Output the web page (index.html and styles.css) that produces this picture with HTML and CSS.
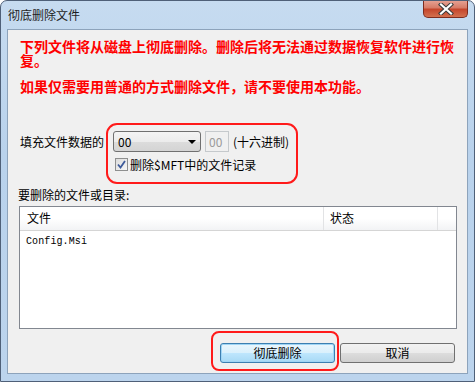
FILE: index.html
```html
<!DOCTYPE html>
<html lang="zh-CN">
<head>
  <meta charset="UTF-8" />
  <title>彻底删除文件</title>
  <link rel="stylesheet" href="styles.css">
</head>
<body>

  <div class="window">
    <div class="titlebar">
      <span class="title">彻底删除文件</span>
      <div class="close">
        <svg width="16" height="12" viewBox="0 0 16 12">
          <path d="M3 1.5 L13 10.5 M13 1.5 L3 10.5" stroke="#3b3b3b" stroke-width="4.2" stroke-linecap="square"/>
          <path d="M3 1.5 L13 10.5 M13 1.5 L3 10.5" stroke="#ffffff" stroke-width="2.2" stroke-linecap="square"/>
        </svg>
      </div>
    </div>

    <div class="client">
      <p class="warn">下列文件将从磁盘上彻底删除。删除后将无法通过数据恢复软件进行恢复。</p>
      <p class="warn">如果仅需要用普通的方式删除文件，请不要使用本功能。</p>

      <div class="fill-row">
        <span class="fill-label">填充文件数据的</span>
        <div class="combo">
          <span>00</span>
          <span class="arrow"></span>
        </div>
        <div class="edit">00</div>
        <span class="hex">(十六进制)</span>
      </div>

      <div class="check-row">
        <span class="checkbox">
          <svg width="9" height="9" viewBox="0 0 9 9">
            <path d="M1 4.5 L3.5 7.5 L8 1" fill="none" stroke="#3d5a9a" stroke-width="1.8"/>
          </svg>
        </span>
        <span>删除$MFT中的文件记录</span>
      </div>

      <div class="list-label">要删除的文件或目录:</div>
      <div class="list">
        <div class="list-head">
          <div class="col-file">文件</div>
          <div class="col-state">状态</div>
          <div class="col-rest"></div>
        </div>
        <div class="list-row">Config.Msi</div>
      </div>

      <div class="buttons">
        <button class="btn btn-default">彻底删除</button>
        <button class="btn">取消</button>
      </div>
    </div>

    <div class="mark mark-fill"></div>
    <div class="mark mark-btn"></div>
  </div>

</body>
</html>
```

FILE: styles.css
```css
html, body {
  margin: 0; padding: 0;
  background: #ffffff;
}
.window {
  position: relative;
  width: 475px; height: 382px;
  box-sizing: border-box;
  border: 1px solid #4f6078;
  border-radius: 7px 7px 0 0;
  background: linear-gradient(to bottom, #c6dbf0 0%, #b9d2ec 40%, #bcd4ed 100%);
  font-family: "Noto Sans CJK SC", "DejaVu Sans", sans-serif;
  font-size: 12px;
  color: #000;
  overflow: hidden;
}
.titlebar {
  display: flex;
  align-items: flex-start;
  justify-content: space-between;
  height: 28px;
}
.title {
  margin: 6px 0 0 7px;
  line-height: 16px;
  color: #1e1e1e;
}
.close {
  display: flex;
  align-items: center;
  justify-content: center;
  width: 45px; height: 18px;
  margin-right: 6px;
  margin-top: -1px;
  box-sizing: border-box;
  border: 1px solid #7d2c1f;
  border-top: none;
  border-radius: 0 0 5px 5px;
  background: linear-gradient(to bottom, #e7a597 0%, #d77c68 45%, #c5462c 55%, #d3704f 100%);
}
.client {
  margin: 0 6px;
  height: 345px;
  box-sizing: border-box;
  border: 1px solid #8da3bb;
  background: #f0f0f0;
  padding: 9px 0 0 12px;
}
.warn {
  margin: 0;
  width: 438px;
  font-size: 14px;
  line-height: 14px;
  font-weight: bold;
  color: #ff0000;
}
.warn + .warn {
  margin-top: 12px;
}
.fill-row {
  display: flex;
  align-items: center;
  height: 21px;
  margin-top: 38px;
}
.fill-label {
  width: 93px;
}
.combo {
  display: flex;
  align-items: center;
  justify-content: space-between;
  width: 88px; height: 21px;
  box-sizing: border-box;
  padding: 0 4px 0 4px;
  border: 1px solid #707070;
  border-radius: 3px;
  background: linear-gradient(to bottom, #f4f4f4 0%, #ececec 50%, #dcdcdc 51%, #d4d4d4 100%);
}
.arrow {
  width: 0; height: 0;
  border-left: 4px solid transparent;
  border-right: 4px solid transparent;
  border-top: 4px solid #000;
}
.edit {
  width: 24px; height: 21px;
  box-sizing: border-box;
  margin-left: 4px;
  padding-left: 3px;
  border: 1px solid #c5c9cc;
  line-height: 19px;
  color: #9a9a9a;
}
.hex {
  margin-left: 4px;
}
.check-row {
  display: flex;
  align-items: center;
  height: 13px;
  margin: 6px 0 0 95px;
}
.checkbox {
  display: flex;
  align-items: center;
  justify-content: center;
  width: 13px; height: 13px;
  box-sizing: border-box;
  margin-right: 2px;
  border: 1px solid #8e8f8f;
  background: linear-gradient(135deg, #dcdcdc 0%, #f6f6f6 100%);
}
.list-label {
  margin: 16px 0 0 -2px;
  line-height: 16px;
}
.list {
  width: 438px; height: 123px;
  box-sizing: border-box;
  margin: 3px 0 0 -1px;
  border: 1px solid #828790;
  background: #ffffff;
}
.list-head {
  display: flex;
  height: 23px;
  border-bottom: 1px solid #d5d5d5;
  background: linear-gradient(to bottom, #ffffff 0%, #ffffff 50%, #f2f3f5 100%);
  line-height: 22px;
}
.col-file {
  width: 304px;
  padding-left: 7px;
  box-sizing: border-box;
  border-right: 1px solid #e2e3e5;
}
.col-state {
  width: 114px;
  padding-left: 6px;
  box-sizing: border-box;
  border-right: 1px solid #e2e3e5;
}
.col-rest {
  flex: 1;
}
.list-row {
  padding-left: 6px;
  margin-top: 3px;
  line-height: 16px;
  font-family: "Liberation Mono", monospace;
  font-size: 10px;
  letter-spacing: 0.1px;
}
.buttons {
  display: flex;
  justify-content: flex-end;
  gap: 5px;
  margin-top: 14px;
  padding-right: 12px;
}
.btn {
  width: 115px; height: 20px;
  box-sizing: border-box;
  padding: 0;
  border: 1px solid #707070;
  border-radius: 3px;
  background: linear-gradient(to bottom, #f2f2f2 0%, #ebebeb 50%, #dddddd 51%, #cfcfcf 100%);
  font-family: "Noto Sans CJK SC", sans-serif;
  font-size: 12px;
  line-height: 16px;
  color: #000;
}
.btn-default {
  border-color: #3c7fb1;
  background: linear-gradient(to bottom, #eaf6fd 0%, #d9f0fc 50%, #bee6fd 51%, #a7d9f5 100%);
  box-shadow: inset 0 0 0 1px #9fd5f5;
}
.mark {
  position: absolute;
  box-sizing: border-box;
  border: 2px solid #ff1a1a;
}
.mark-fill {
  left: 105px; top: 122px;
  width: 192px; height: 61px;
  border-radius: 11px;
}
.mark-btn {
  left: 210px; top: 330px;
  width: 128px; height: 40px;
  border-radius: 8px;
}
```
